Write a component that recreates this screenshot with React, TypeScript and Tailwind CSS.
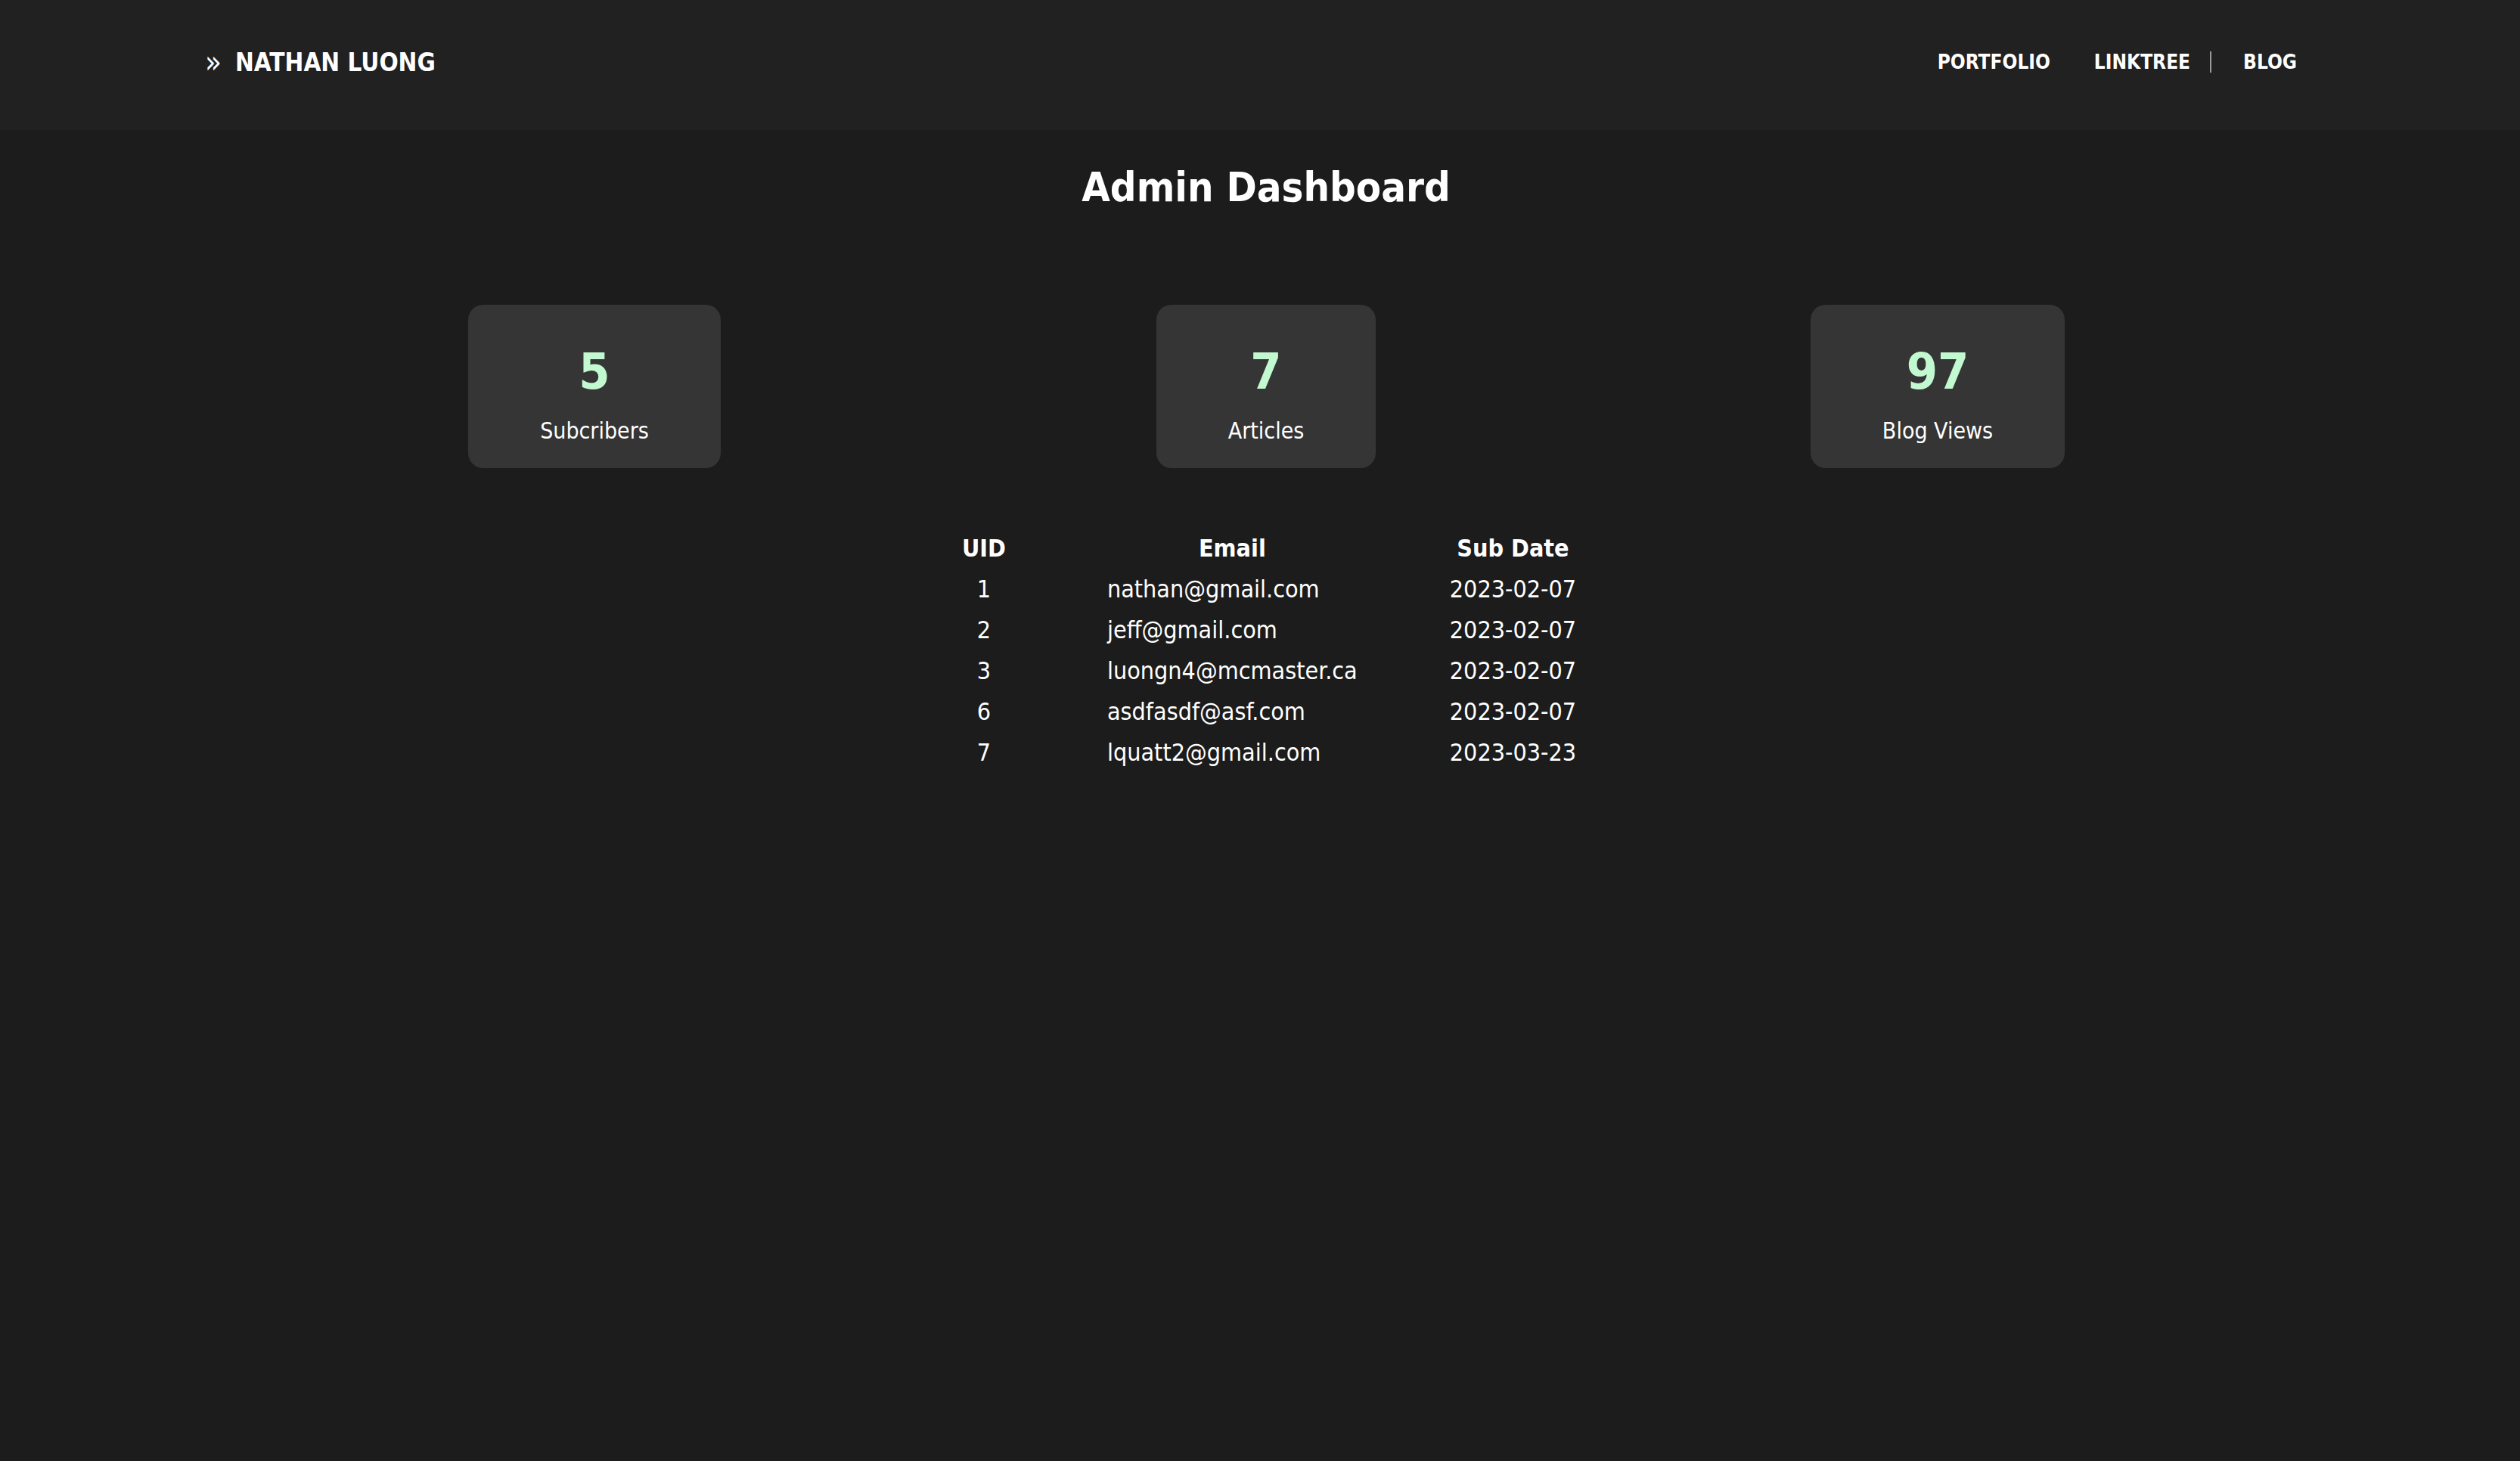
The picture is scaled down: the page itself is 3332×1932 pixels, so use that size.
const font = { fontFamily: "'DejaVu Sans Condensed', 'DejaVu Sans', sans-serif" };

const stats = [
  { value: "5", label: "Subcribers" },
  { value: "7", label: "Articles" },
  { value: "97", label: "Blog Views" },
];

const subs = [
  { uid: 1, email: "nathan@gmail.com", date: "2023-02-07" },
  { uid: 2, email: "jeff@gmail.com", date: "2023-02-07" },
  { uid: 3, email: "luongn4@mcmaster.ca", date: "2023-02-07" },
  { uid: 6, email: "asdfasdf@asf.com", date: "2023-02-07" },
  { uid: 7, email: "lquatt2@gmail.com", date: "2023-03-23" },
];

function StatCard({ value, label }: { value: string; label: string }) {
  return (
    <div className="flex flex-col items-center rounded-[20px] bg-[#353535] px-[95px] pt-[56px] pb-[34px]">
      <span className="text-[66px] font-bold leading-none text-[#c3f9d0]">{value}</span>
      <span className="mt-[30px] text-[30px] leading-none text-white">{label}</span>
    </div>
  );
}

export default function App() {
  return (
    <div className="min-h-[1932px] bg-[#1c1c1c] text-white" style={font}>
      {/* top nav */}
      <header className="flex h-[172px] items-center justify-between bg-[#212121] pb-[8px] pl-[271px] pr-[295px]">
        <a href="#" className="flex items-center gap-[18px]">
          <span className="text-[40px] leading-none">»</span>
          <span className="text-[33px] font-bold leading-none">NATHAN LUONG</span>
        </a>
        <nav className="flex items-center text-[26px] font-bold leading-none">
          <a href="#">PORTFOLIO</a>
          <a href="#" className="ml-[58px]">LINKTREE</a>
          <span className="ml-[26px] h-[28px] w-[2px] bg-[#9a9a9a]" />
          <a href="#" className="ml-[42px]">BLOG</a>
        </nav>
      </header>

      <main className="pl-[16px]">
        <h1 className="mt-[42px] text-center text-[54px] font-bold leading-[68px]">Admin Dashboard</h1>

        <div className="mx-auto mt-[121px] grid w-[2664px] grid-cols-3">
          {stats.map((s) => (
            <div key={s.label} className="flex justify-center">
              <StatCard value={s.value} label={s.label} />
            </div>
          ))}
        </div>

        <table className="mx-auto mt-[79px] border-collapse text-[32px] leading-[54px]">
          <thead>
            <tr>
              <th className="pl-[74px] pr-[70px] font-bold">UID</th>
              <th className="pl-[64px] pr-[56px] font-bold">Email</th>
              <th className="px-[66px] font-bold">Sub Date</th>
            </tr>
          </thead>
          <tbody>
            {subs.map((s) => (
              <tr key={s.uid}>
                <td className="pl-[74px] pr-[70px] text-center">{s.uid}</td>
                <td className="pl-[64px] pr-[56px] text-left">{s.email}</td>
                <td className="px-[66px] text-center">{s.date}</td>
              </tr>
            ))}
          </tbody>
        </table>
      </main>
    </div>
  );
}
